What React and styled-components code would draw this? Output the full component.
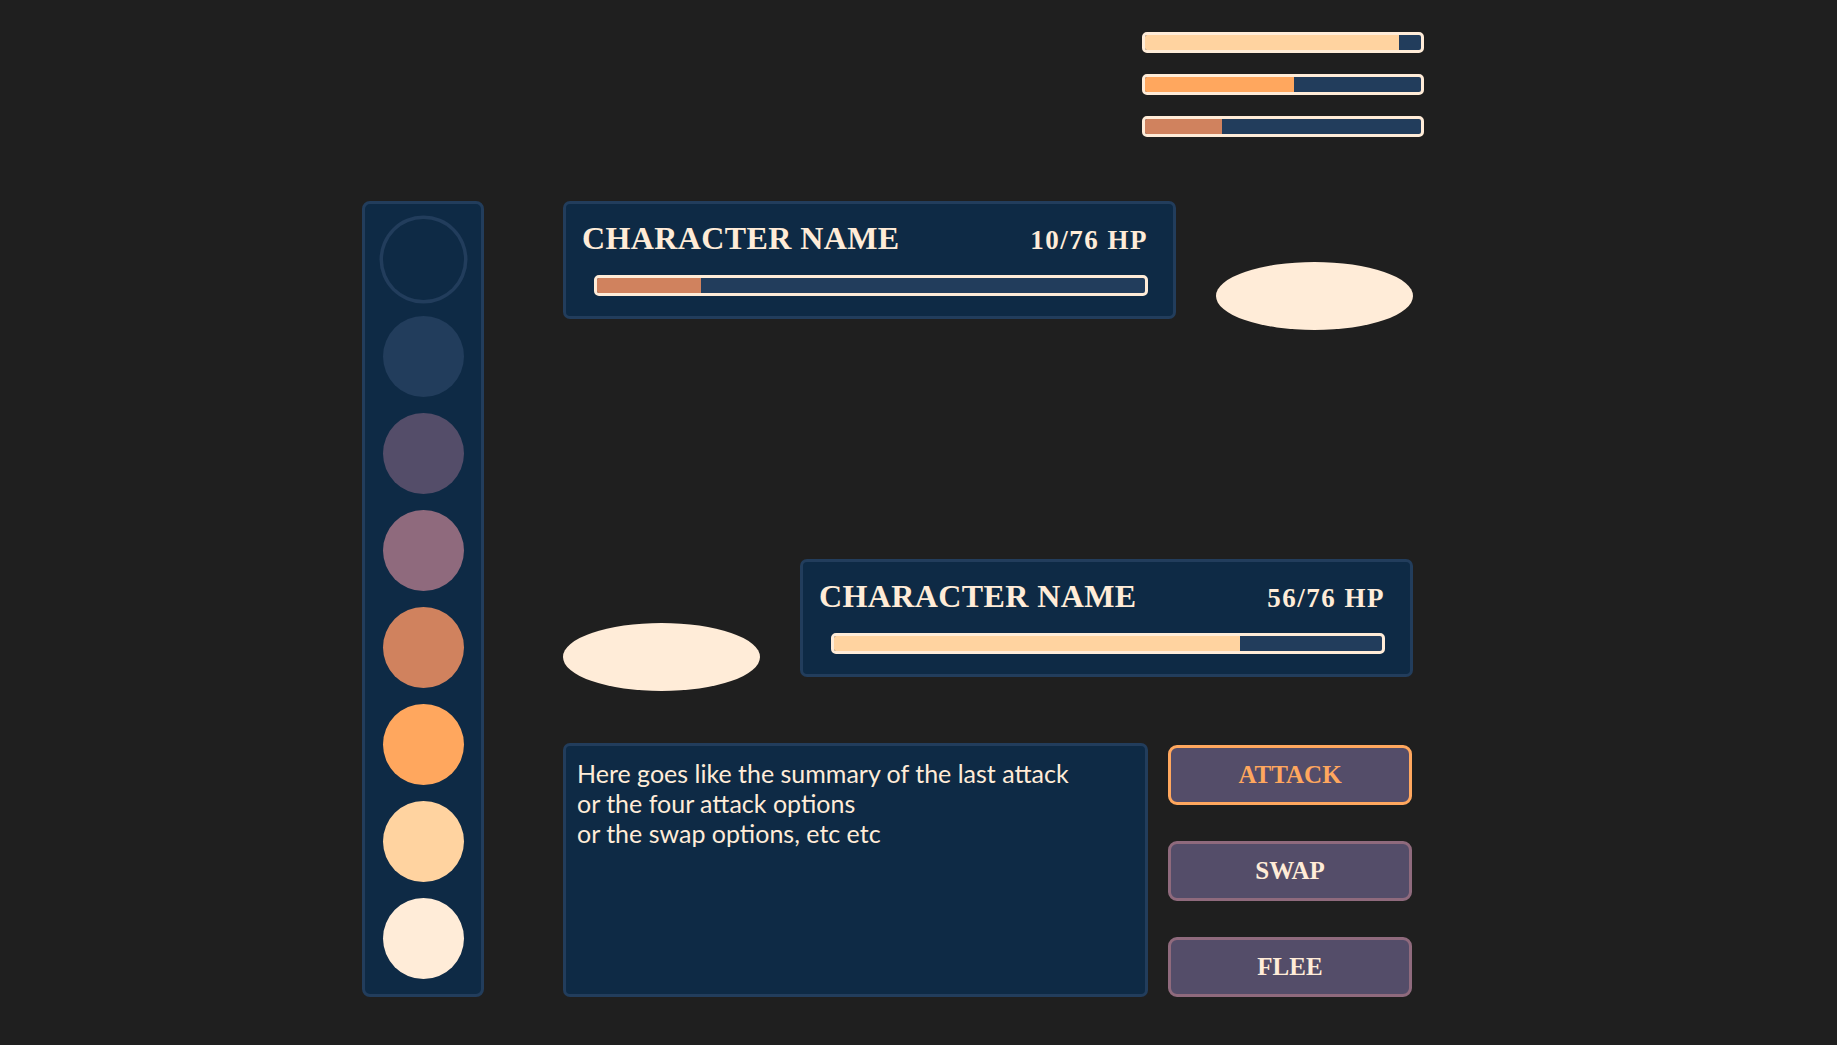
import React from 'react';
import styled, { createGlobalStyle } from 'styled-components';

// palette, in the order the swatch column shows it
const PALETTE = ['#0e2a45', '#223d5c', '#544d69', '#8f6a7d', '#d0825e', '#ffa75e', '#ffd3a0', '#ffecd8'];

const NAVY = PALETTE[0];
const SLATE = PALETTE[1];
const CREAM = PALETTE[7];

const TEST_METERS = [
    { value: 92, color: PALETTE[6] },
    { value: 54, color: PALETTE[5] },
    { value: 28, color: PALETTE[4] },
];

const GlobalStyle = createGlobalStyle`
    html, body {
        margin: 0;
        background: #1f1f1f;
    }
    * {
        box-sizing: border-box;
    }
`;

export default function App() {
    return (
        <>
            <GlobalStyle />
            <Screen>
                <Meters>
                    {TEST_METERS.map((m, i) => (
                        <HpBar key={i} value={m.value} color={m.color} />
                    ))}
                </Meters>

                <Battle>
                    <Swatches>
                        {PALETTE.map((c, i) => (
                            <Swatch key={c} $color={c} $selected={i === 0} />
                        ))}
                    </Swatches>

                    <Arena>
                        <EnemyRow>
                            <StatusCard name="Character Name" hp={10} max={76} fill={19} color={PALETTE[4]} />
                            <Platform $top={61} />
                        </EnemyRow>

                        <PlayerRow>
                            <Platform $top={64} />
                            <StatusCard name="Character Name" hp={56} max={76} fill={74} color={PALETTE[6]} />
                        </PlayerRow>

                        <ActionRow>
                            <MessageBox>
                                Here goes like the summary of the last attack<br />
                                or the four attack options<br />
                                or the swap options, etc etc
                            </MessageBox>
                            <Menu>
                                <MenuButton $active>Attack</MenuButton>
                                <MenuButton>Swap</MenuButton>
                                <MenuButton>Flee</MenuButton>
                            </Menu>
                        </ActionRow>
                    </Arena>
                </Battle>
            </Screen>
        </>
    );
}

function HpBar({ value, color }) {
    return (
        <Track>
            <Fill $color={color} style={{ width: `${value}%` }} />
        </Track>
    );
}

function StatusCard({ name, hp, max, fill, color }) {
    return (
        <Card>
            <CardHeader>
                <Name>{name}</Name>
                <Hp>{hp}/{max} HP</Hp>
            </CardHeader>
            <CardBar>
                <HpBar value={fill} color={color} />
            </CardBar>
        </Card>
    );
}

const Screen = styled.div`
    min-height: 100vh;
    padding: 32px 0 0 362px;
    display: flex;
    flex-direction: column;
`;

const Meters = styled.div`
    margin-left: 780px;
    width: 282px;
    display: flex;
    flex-direction: column;
    gap: 21px;
`;

const Track = styled.div`
    height: 21px;
    border: 3px solid ${CREAM};
    border-radius: 5px;
    background: ${SLATE};
    overflow: hidden;
    display: flex;
`;

const Fill = styled.div`
    height: 100%;
    background: ${props => props.$color};
`;

const Battle = styled.div`
    margin-top: 64px;
    display: flex;
    align-items: flex-start;
    gap: 79px;
`;

const Swatches = styled.div`
    width: 122px;
    padding: 15px 0;
    background: ${NAVY};
    border: 3px solid ${SLATE};
    border-radius: 8px;
    display: flex;
    flex-direction: column;
    align-items: center;
    gap: 16px;
`;

const Swatch = styled.div`
    width: 81px;
    height: 81px;
    border-radius: 50%;
    background: ${props => props.$color};
    box-shadow: ${props => props.$selected ? `0 0 0 3.5px ${SLATE}` : 'none'};
`;

const Arena = styled.div`
    width: 850px;
    display: flex;
    flex-direction: column;
`;

const EnemyRow = styled.div`
    display: flex;
    align-items: flex-start;
    gap: 40px;
`;

const PlayerRow = styled(EnemyRow)`
    margin-top: 229px;
`;

const Platform = styled.div`
    width: 197px;
    height: 68px;
    margin-top: ${props => props.$top}px;
    border-radius: 50%;
    background: ${CREAM};
`;

const Card = styled.div`
    width: 613px;
    height: 118px;
    padding-top: 14px;
    background: ${NAVY};
    border: 3px solid ${SLATE};
    border-radius: 7px;
`;

const CardHeader = styled.div`
    display: flex;
    justify-content: space-between;
    align-items: baseline;
    padding: 0 25px 0 16px;
    height: 40px;
    line-height: 40px;
    color: ${CREAM};
    font-family: "Liberation Serif", "DejaVu Serif", serif;
    font-weight: 700;
    text-transform: uppercase;
`;

const Name = styled.span`
    font-size: 32px;
    letter-spacing: 0.4px;
`;

const Hp = styled.span`
    font-size: 27px;
    letter-spacing: 1.5px;
`;

const CardBar = styled.div`
    margin: 17px 25px 0 28px;
`;

const ActionRow = styled.div`
    margin-top: 52px;
    display: flex;
    gap: 20px;
`;

const MessageBox = styled.div`
    width: 585px;
    height: 254px;
    padding: 12px 11px;
    background: ${NAVY};
    border: 3px solid ${SLATE};
    border-radius: 7px;
    color: ${CREAM};
    font-family: Lato, "Liberation Sans", sans-serif;
    font-size: 25px;
    line-height: 30px;
`;

const Menu = styled.div`
    width: 244px;
    padding-top: 2px;
    display: flex;
    flex-direction: column;
    gap: 36px;
`;

const MenuButton = styled.button`
    height: 60px;
    background: ${PALETTE[2]};
    border: 3px solid ${props => props.$active ? PALETTE[5] : PALETTE[3]};
    border-radius: 9px;
    color: ${props => props.$active ? PALETTE[5] : CREAM};
    font-family: "Liberation Serif", "DejaVu Serif", serif;
    font-weight: 700;
    font-size: 25px;
    text-transform: uppercase;
    cursor: pointer;
    padding: 0;
`;
